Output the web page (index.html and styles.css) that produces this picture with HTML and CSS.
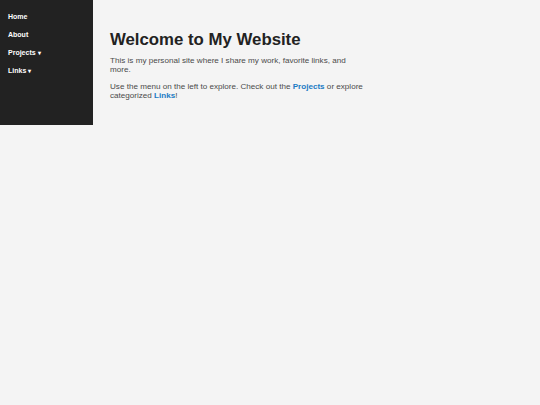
FILE: index.html
```html
<!DOCTYPE html>
<html>
<head>
<meta charset="utf-8">
<link rel="stylesheet" href="styles.css">
</head>
<body>
<div class="layout">
  <nav class="sidebar">
    <ul class="menu">
      <li class="item"><a href="#">Home</a></li>
      <li class="item"><a href="#">About</a></li>
      <li class="item"><a href="#">Projects <span class="caret">▾</span></a></li>
      <li class="item"><a href="#">Links <span class="caret">▾</span></a></li>
    </ul>
  </nav>
  <main class="content">
    <h1 class="title">Welcome to My Website</h1>
    <p class="text">This is my personal site where I share my work, favorite links, and more.</p>
    <p class="text">Use the menu on the left to explore. Check out the <a class="link" href="#">Projects</a> or explore categorized <a class="link" href="#">Links</a>!</p>
  </main>
</div>
</body>
</html>
```
FILE: styles.css
```css
html, body {
  margin: 0;
  padding: 0;
  background: #f4f4f4;
  font-family: "Liberation Sans", Arial, sans-serif;
}
.layout {
  display: flex;
  align-items: flex-start;
}
.sidebar {
  width: 93px;
  height: 125px;
  box-sizing: border-box;
  background: #222222;
  padding-top: 8px;
}
.menu {
  list-style: none;
  margin: 0;
  padding: 0;
}
.item a {
  display: block;
  padding: 0 8px;
  line-height: 18px;
  font-size: 7px;
  font-weight: bold;
  color: #ffffff;
  text-decoration: none;
}
.caret {
  font-size: 6px;
}
.content {
  padding: 30px 17px;
}
.title {
  margin: 0 0 6px;
  font-size: 16.8px;
  font-weight: bold;
  color: #222222;
}
.text {
  margin: 0 0 7.5px;
  max-width: 254px;
  font-size: 8.1px;
  line-height: 9.3px;
  color: #4a4a4a;
}
.link {
  color: #1a7bc4;
  font-weight: bold;
  text-decoration: none;
}
```
